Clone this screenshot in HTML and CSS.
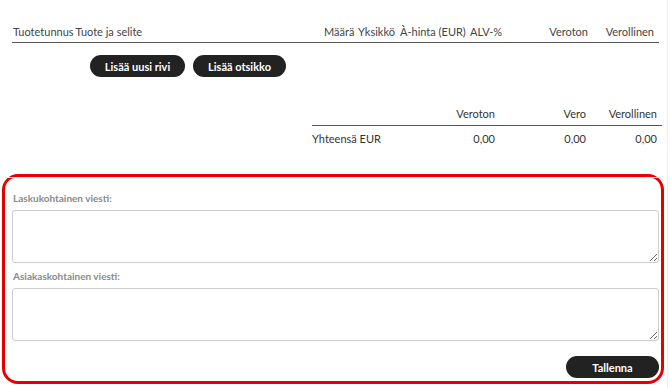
FILE: index.html
```html
<!DOCTYPE html>
<html lang="fi">
<head>
    <meta charset="UTF-8">
    <meta name="viewport" content="width=device-width, initial-scale=1.0">
    <title>Lasku</title>
    <link rel="stylesheet" href="styles.css">
</head>
<body>
    <div class="rows">
        <div class="rows-head">
            <span class="c-code">Tuotetunnus</span>
            <span class="c-name">Tuote ja selite</span>
            <span class="c-qty">Määrä</span>
            <span class="c-unit">Yksikkö</span>
            <span class="c-price">À-hinta (EUR)</span>
            <span class="c-vat">ALV-%</span>
            <span class="c-net num">Veroton</span>
            <span class="c-gross num">Verollinen</span>
        </div>
        <div class="row-actions">
            <button class="btn">Lisää uusi rivi</button>
            <button class="btn">Lisää otsikko</button>
        </div>
    </div>

    <table class="totals">
        <thead>
            <tr>
                <th class="t-label"></th>
                <th class="num t-net">Veroton</th>
                <th class="num t-tax">Vero</th>
                <th class="num t-gross">Verollinen</th>
            </tr>
        </thead>
        <tbody>
            <tr>
                <td class="t-label">Yhteensä EUR</td>
                <td class="num">0,00</td>
                <td class="num">0,00</td>
                <td class="num">0,00</td>
            </tr>
        </tbody>
    </table>

    <div class="highlight">
        <div class="messages">
            <label class="msg-label" for="invoiceMsg">Laskukohtainen viesti:</label>
            <textarea id="invoiceMsg" class="msg-box"></textarea>
            <label class="msg-label" for="customerMsg">Asiakaskohtainen viesti:</label>
            <textarea id="customerMsg" class="msg-box"></textarea>
            <div class="save-row">
                <button class="btn btn-save">Tallenna</button>
            </div>
        </div>
    </div>
</body>
</html>
```

FILE: styles.css
```css
body {
    margin: 0;
    font-family: Lato, "Open Sans", sans-serif;
    font-size: 11px;
    color: #444;
    background: #fff;
    width: 667px;
    border-right: 1px solid #eee;
    min-height: 388px;
}
.rows {
    padding: 20px 8px 0 12px;
}
.rows-head {
    display: flex;
    height: 22px;
    align-items: center;
    border-bottom: 1px solid #555;
}
.rows-head span {
    white-space: nowrap;
}
.c-code { padding: 0 2px 0 1px; }
.c-name { flex: 1; }
.c-qty { width: 34px; }
.c-unit { width: 42px; }
.c-price { width: 70px; }
.c-vat { width: 40px; }
.c-net { width: 78px; }
.c-gross { width: 71px; padding-right: 5px; box-sizing: border-box; }
.num {
    text-align: right;
}
.row-actions {
    display: flex;
    gap: 8px;
    padding: 12px 0 0 78px;
}
.btn {
    background-color: #222;
    color: white;
    border: none;
    border-radius: 11px;
    height: 22px;
    padding: 0 16px;
    font-family: Lato, "Open Sans", sans-serif;
    font-size: 11px;
    font-weight: bold;
    cursor: pointer;
}
.row-actions .btn {
    width: 95px;
    padding: 0;
}
.row-actions .btn + .btn {
    width: 93px;
}
.totals {
    margin: 24px 8px 0 312px;
    width: 350px;
    border-collapse: collapse;
    color: #333;
}
.totals th {
    font-weight: normal;
    height: 24px;
    padding: 0 5px 0 0;
    border-bottom: 1px solid #555;
}
.totals td {
    height: 24px;
    padding: 0 5px 0 0;
}
.t-label { width: 100px; text-align: left; }
.t-net { width: 78px; }
.t-tax { width: 86px; }
.highlight {
    margin: 24px 3px 2px 2px;
    border: 3px solid #e60000;
    border-radius: 16px;
    height: 204px;
}
.messages {
    border-top: 1px solid #e6e6e6;
    padding: 14px 2px 0 7px;
    display: flex;
    flex-direction: column;
}
.msg-label {
    font-size: 10px;
    font-weight: bold;
    color: #8a8a8a;
    padding-left: 1px;
    height: 18px;
}
.msg-box {
    height: 53px;
    box-sizing: border-box;
    border: 1px solid #ccc;
    border-radius: 3px;
    margin: 0 0 7px 0;
    resize: vertical;
}
.save-row {
    display: flex;
    justify-content: flex-end;
    padding-top: 8px;
}
.btn-save {
    width: 93px;
    padding: 0;
}
```
